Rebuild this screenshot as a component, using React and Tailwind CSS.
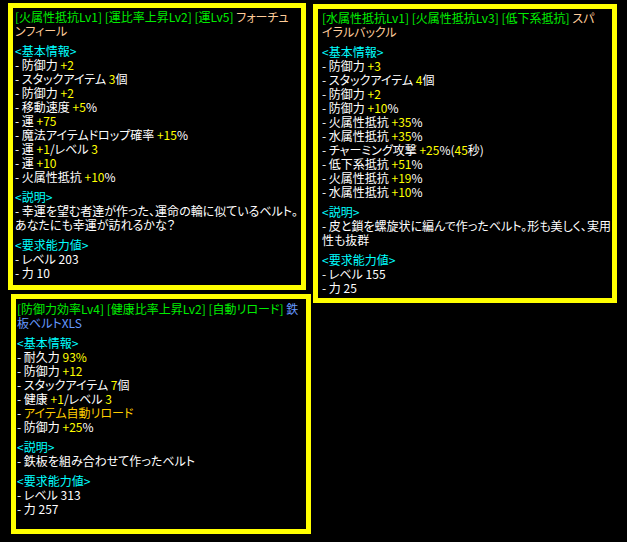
import React from 'react';

const W = 'text-white';
const Y = 'text-[#ffff00]';
const G = 'text-[#00ee00]';
const C = 'text-[#00ffff]';
const O = 'text-[#ffcc00]';
const P = 'text-[#ffcc99]';
const B = 'text-[#6699ff]';

// each line is a list of [text, colour] pieces
const items = [
  {
    box: 'ml-[8px] mt-[3px] w-[298px] h-[287px] pl-[2px] pt-[2px]',
    title: [
      [['[火属性抵抗Lv1] [運比率上昇Lv2] [運Lv5] ', G], ['フォーチュ', P]],
      [['ンフィール', P]],
    ],
    basic: [
      [['- 防御力 ', W], ['+2', Y]],
      [['- スタックアイテム ', W], ['3', Y], ['個', W]],
      [['- 防御力 ', W], ['+2', Y]],
      [['- 移動速度 ', W], ['+5', Y], ['%', W]],
      [['- 運 ', W], ['+75', Y]],
      [['- 魔法アイテムドロップ確率 ', W], ['+15', Y], ['%', W]],
      [['- 運 ', W], ['+1', Y], ['/レベル ', W], ['3', Y]],
      [['- 運 ', W], ['+10', Y]],
      [['- 火属性抵抗 ', W], ['+10', Y], ['%', W]],
    ],
    desc: [
      [['- 幸運を望む者達が作った、運命の輪に似ているベルト。', W]],
      [['あなたにも幸運が訪れるかな？', W]],
    ],
    req: [
      [['- レベル 203', W]],
      [['- 力 10', W]],
    ],
  },
  {
    box: 'ml-[2px] mt-[4px] w-[304px] h-[299px] pl-[4px] pt-[2px]',
    title: [
      [['[水属性抵抗Lv1] [火属性抵抗Lv3] [低下系抵抗] ', G], ['スパ', P]],
      [['イラルバックル', P]],
    ],
    basic: [
      [['- 防御力 ', W], ['+3', Y]],
      [['- スタックアイテム ', W], ['4', Y], ['個', W]],
      [['- 防御力 ', W], ['+2', Y]],
      [['- 防御力 ', W], ['+10', Y], ['%', W]],
      [['- 火属性抵抗 ', W], ['+35', Y], ['%', W]],
      [['- 水属性抵抗 ', W], ['+35', Y], ['%', W]],
      [['- チャーミング攻撃 ', W], ['+25', Y], ['%(', W], ['45', Y], ['秒)', W]],
      [['- 低下系抵抗 ', W], ['+51', Y], ['%', W]],
      [['- 火属性抵抗 ', W], ['+19', Y], ['%', W]],
      [['- 水属性抵抗 ', W], ['+10', Y], ['%', W]],
    ],
    desc: [
      [['- 皮と鎖を螺旋状に編んで作ったベルト。形も美しく、実用', W]],
      [['性も抜群', W]],
    ],
    req: [
      [['- レベル 155', W]],
      [['- 力 25', W]],
    ],
  },
  {
    box: 'ml-[11px] mt-[4px] w-[300px] h-[240px] pl-[1px] pt-[3px]',
    title: [
      [['[防御力効率Lv4] [健康比率上昇Lv2] [自動リロード] ', G], ['鉄', B]],
      [['板ベルトXLS', B]],
    ],
    basic: [
      [['- 耐久力 ', W], ['93%', Y]],
      [['- 防御力 ', W], ['+12', Y]],
      [['- スタックアイテム ', W], ['7', Y], ['個', W]],
      [['- 健康 ', W], ['+1', Y], ['/レベル ', W], ['3', Y]],
      [['- ', W], ['アイテム自動リロード', O]],
      [['- 防御力 ', W], ['+25', Y], ['%', W]],
    ],
    desc: [
      [['- 鉄板を組み合わせて作ったベルト', W]],
    ],
    req: [
      [['- レベル 313', W]],
      [['- 力 257', W]],
    ],
  },
];

const Line = ({ parts }) => (
  <div className="whitespace-pre h-[14px] flex">
    {parts.map(([text, color], i) => (
      <span key={i} className={`${color} inline-block h-[14px] leading-[14px]`}>{text}</span>
    ))}
  </div>
);

const Section = ({ label, lines }) => (
  <div className="mt-[6px]">
    <div className="h-[14px] flex">
      <span className={`${C} inline-block h-[14px] leading-[14px]`}>&lt;{label}&gt;</span>
    </div>
    {lines.map((l, i) => <Line key={i} parts={l} />)}
  </div>
);

const ItemBox = ({ item }) => (
  <div className={`box-border border-[5px] border-[#ffff00] bg-black shrink-0 ${item.box}`}>
    {item.title.map((l, i) => <Line key={i} parts={l} />)}
    <Section label="基本情報" lines={item.basic} />
    <Section label="説明" lines={item.desc} />
    <Section label="要求能力値" lines={item.req} />
  </div>
);

export default function App() {
  return (
    <div
      className="w-[627px] h-[542px] bg-black flex items-start overflow-hidden text-[12px] leading-[14px] [font-feature-settings:'palt'] text-white"
      style={{ fontFamily: '"Noto Sans CJK JP", "Noto Sans", sans-serif' }}
    >
      <div className="flex flex-col w-[311px] shrink-0">
        <ItemBox item={items[0]} />
        <ItemBox item={items[2]} />
      </div>
      <ItemBox item={items[1]} />
    </div>
  );
}
